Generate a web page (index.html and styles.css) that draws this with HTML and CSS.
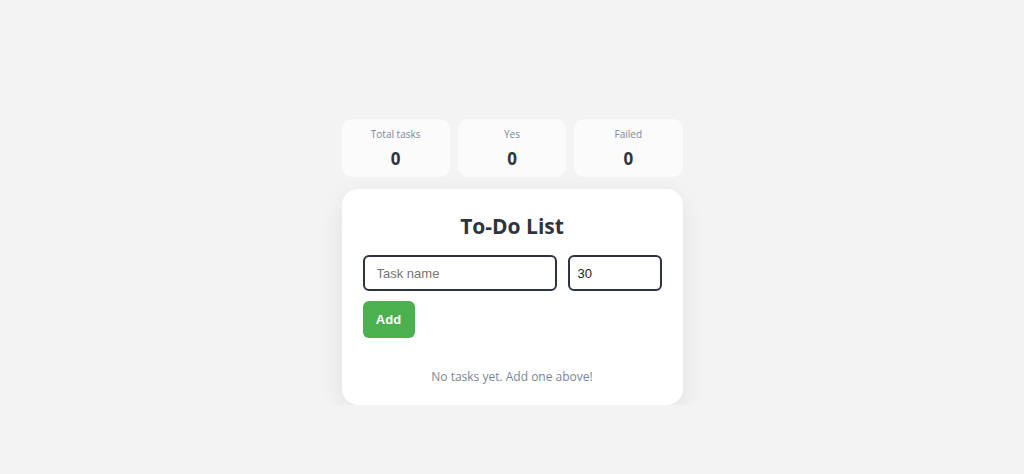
FILE: index.html
```html
<!DOCTYPE html>
<html lang="en">
<head>
  <meta charset="UTF-8">
  <meta name="viewport" content="width=device-width, initial-scale=1.0">
  <title>To-Do List</title>
  <link rel="stylesheet" href="styles.css">
</head>
<body>
  <div class="wrap">
    <div class="stats">
      <div class="stat">
        <div class="stat-label">Total tasks</div>
        <div class="stat-value" id="total">0</div>
      </div>
      <div class="stat">
        <div class="stat-label">Yes</div>
        <div class="stat-value" id="done">0</div>
      </div>
      <div class="stat">
        <div class="stat-label">Failed</div>
        <div class="stat-value" id="failed">0</div>
      </div>
    </div>

    <div class="card">
      <h1 class="title">To-Do List</h1>
      <div class="inputs">
        <input type="text" class="task-input" id="taskName" placeholder="Task name">
        <input type="number" class="time-input" id="taskTime" value="30">
      </div>
      <button class="add-btn" id="addBtn">Add</button>
      <ul class="list" id="list"></ul>
      <p class="empty" id="empty">No tasks yet. Add one above!</p>
    </div>
  </div>
</body>
</html>
```

FILE: styles.css
```css
body {
  margin: 0;
  background-color: #f3f3f3;
  font-family: "Open Sans", "Segoe UI", sans-serif;
  color: #2d3440;
}
.wrap {
  width: 341px;
  margin: 119px auto 0;
}
.stats {
  display: grid;
  grid-template-columns: repeat(3, 1fr);
  gap: 8px;
  margin-bottom: 12px;
}
.stat {
  background-color: #fbfbfb;
  border-radius: 10px;
  height: 58px;
  box-sizing: border-box;
  padding-top: 8px;
  text-align: center;
}
.stat-label {
  font-size: 10px;
  color: #7c8596;
  line-height: 14px;
}
.stat-value {
  font-size: 17px;
  font-weight: 700;
  line-height: 24px;
  margin-top: 6px;
}
.card {
  background-color: #fff;
  border-radius: 16px;
  padding: 21px 21px 20px;
  box-shadow: 0 8px 24px rgba(0, 0, 0, 0.08);
}
.title {
  margin: 0 0 15px;
  padding-top: 2px;
  font-size: 21px;
  line-height: 28px;
  text-align: center;
}
.inputs {
  display: flex;
  gap: 11px;
  margin-bottom: 10px;
}
.inputs input {
  height: 36px;
  box-sizing: border-box;
  border: 2px solid #2d3440;
  border-radius: 6px;
  padding: 0 12px;
  font-family: "Liberation Sans", Arial, sans-serif;
  font-size: 13px;
  color: #222;
  background: #fff;
}
.task-input {
  width: 194px;
}
.time-input {
  width: 94px;
  padding: 0 8px !important;
}
.add-btn {
  width: 52px;
  height: 37px;
  border: none;
  border-radius: 6px;
  background-color: #4caf50;
  color: #fff;
  font-family: "Liberation Sans", Arial, sans-serif;
  font-weight: 700;
  font-size: 13px;
  cursor: pointer;
}
.list {
  list-style: none;
  margin: 0;
  padding: 0;
}
.empty {
  margin: 30px 0 0;
  text-align: center;
  font-size: 12px;
  color: #7c8596;
}
```
